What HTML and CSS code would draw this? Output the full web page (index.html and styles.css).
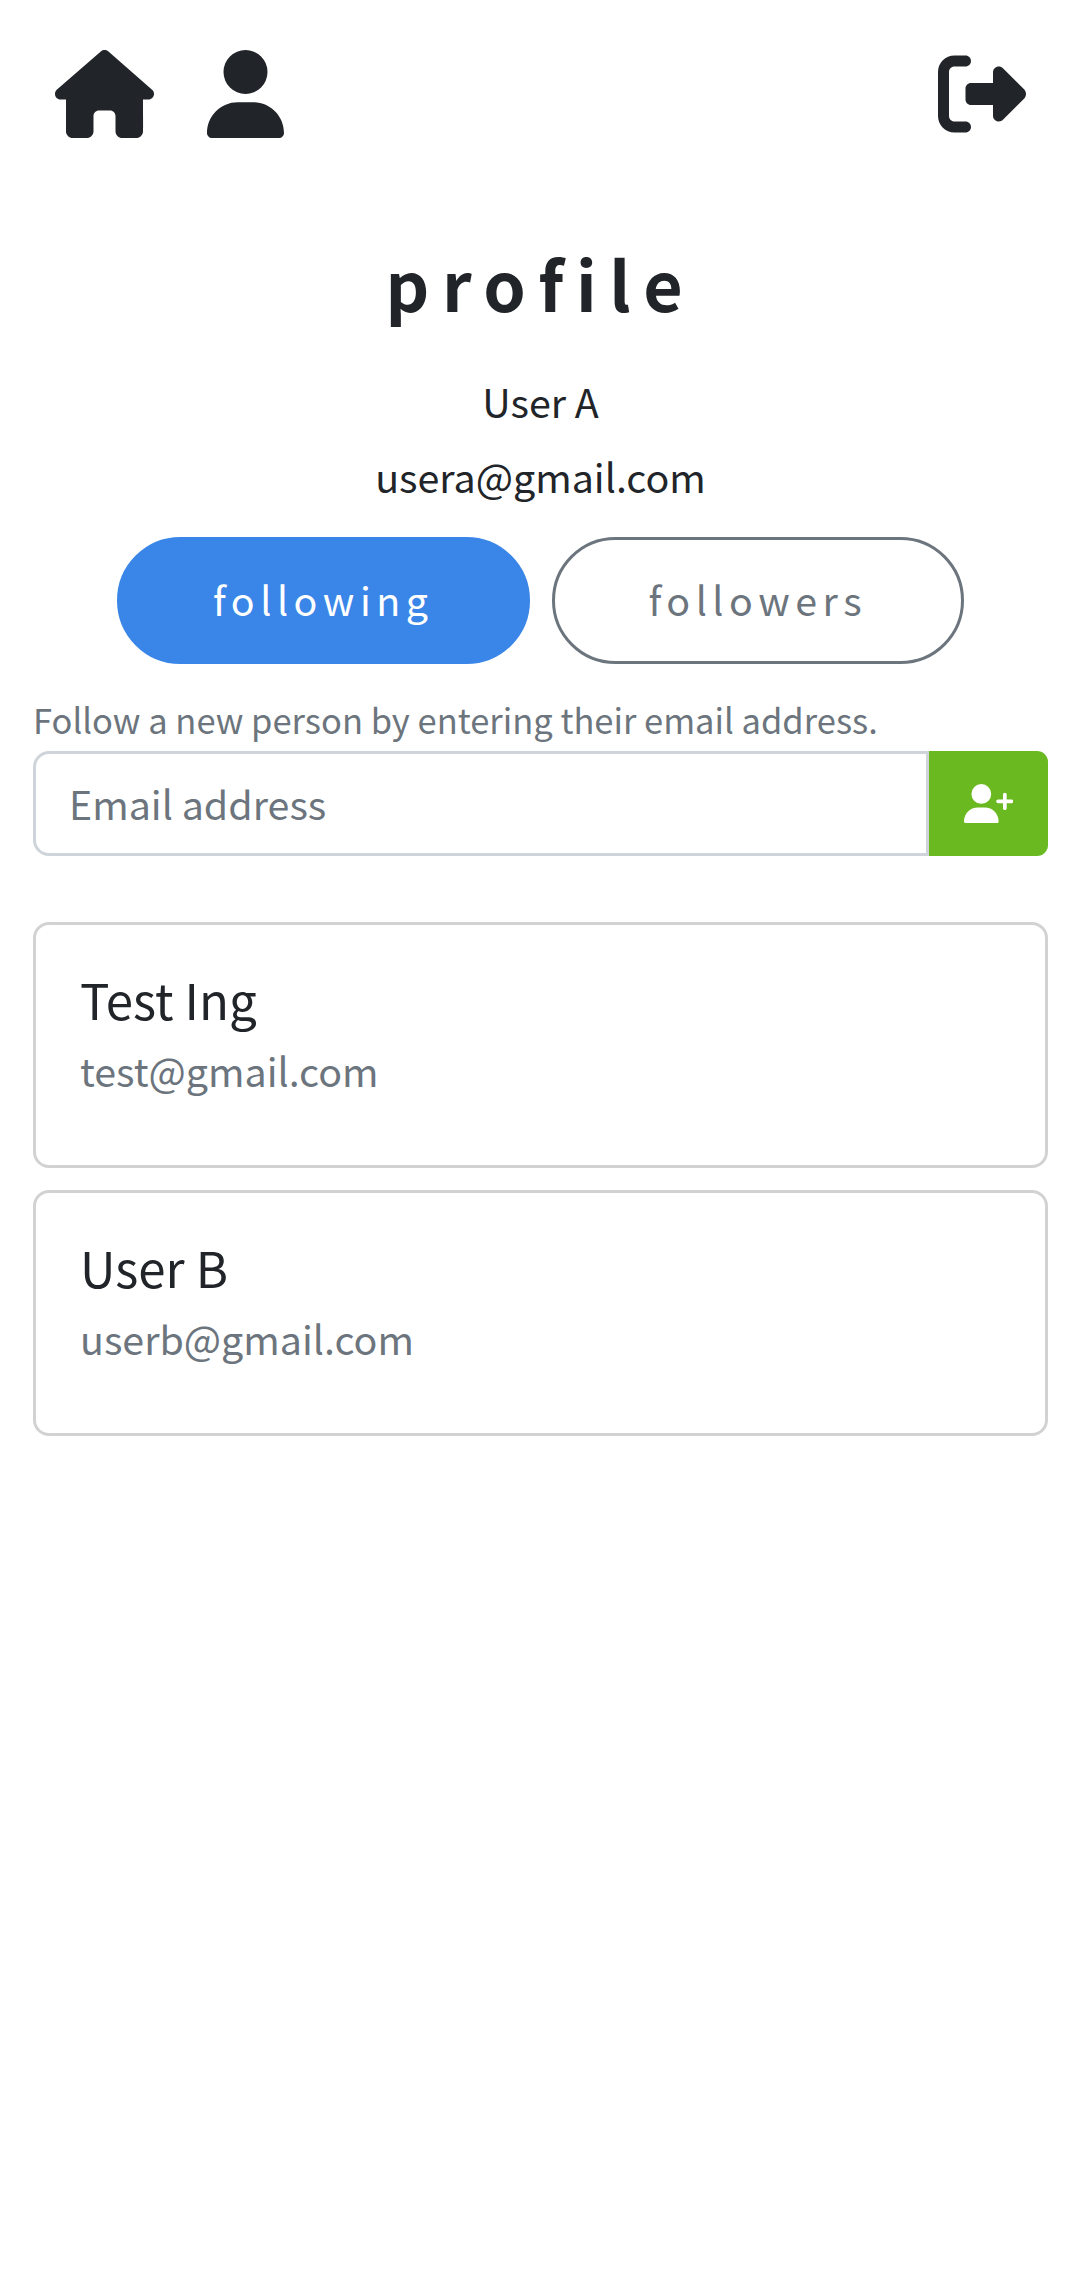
FILE: index.html
```html
<!DOCTYPE html>
<html lang="en">
<head>
<meta charset="utf-8">
<title>Profile</title>
<link rel="stylesheet" href="styles.css">
</head>
<body>
<nav class="navbar">
  <a class="nav-home" aria-label="Home"><svg class="icon icon-home" viewBox="0 0 576 512"><path d="M575.800 255.500c0 18-15 32.100-32 32.100h-32l.7 160.200c0 2.700-.2 5.400-.5 8.100V472c0 22.100-17.900 40-40 40H456c-1.100 0-2.200 0-3.300-.1c-1.400 .1-2.800 .1-4.200 .1H416 392c-22.100 0-40-17.900-40-40V448 384c0-17.700-14.300-32-32-32H256c-17.700 0-32 14.300-32 32v64 24c0 22.100-17.900 40-40 40H160 128.100c-1.500 0-3-.1-4.500-.2c-1.200 .1-2.400 .2-3.600 .2H104c-22.100 0-40-17.900-40-40V360c0-.9 0-1.900 .1-2.800V287.600H32c-18 0-32-14-32-32.100c0-9 3-17 10-24L266.400 8c7-7 15-8 22-8s15 2 21 7L564.800 231.500c8 7 12 15 11 24z"/></svg></a>
  <a class="nav-user" aria-label="Profile"><svg class="icon icon-user" viewBox="0 0 448 512"><path d="M224 256A128 128 0 1 0 224 0a128 128 0 1 0 0 256zm-45.700 48C79.800 304 0 383.800 0 482.300C0 498.700 13.300 512 29.700 512H418.300c16.400 0 29.700-13.300 29.700-29.700C448 383.800 368.200 304 269.700 304H178.300z"/></svg></a>
  <a class="nav-logout" aria-label="Log out"><svg class="icon icon-logout" viewBox="0 0 512 512"><path d="M377.900 105.900L500.700 228.700c7.200 7.200 11.300 17.100 11.300 27.300s-4.100 20.100-11.300 27.300L377.900 406.100c-6.400 6.400-15 9.900-24 9.900c-18.700 0-33.900-15.200-33.900-33.900l0-62.100-128 0c-17.700 0-32-14.300-32-32l0-64c0-17.700 14.300-32 32-32l128 0 0-62.100c0-18.700 15.200-33.900 33.900-33.900c9 0 17.600 3.600 24 9.900zM160 96L96 96c-17.700 0-32 14.300-32 32l0 256c0 17.700 14.300 32 32 32l64 0c17.700 0 32 14.300 32 32s-14.300 32-32 32l-64 0c-53 0-96-43-96-96L0 128C0 75 43 32 96 32l64 0c17.700 0 32 14.300 32 32s-14.300 32-32 32z"/></svg></a>
</nav>
<main class="content">
  <header class="profile">
    <h1 class="profile-title">profile</h1>
    <p class="profile-line">User A</p>
    <p class="profile-line">usera@gmail.com</p>
  </header>
  <div class="tabs">
    <button class="tab tab-active" type="button">following</button>
    <button class="tab" type="button">followers</button>
  </div>
  <form class="follow-form">
    <label class="follow-label" for="email">Follow a new person by entering their email address.</label>
    <div class="input-group">
      <input class="email-input" id="email" type="email" placeholder="Email address">
      <button class="add-button" type="button" aria-label="Follow"><svg class="icon-add" viewBox="0 0 640 512"><path d="M96 128a128 128 0 1 1 256 0A128 128 0 1 1 96 128zM0 482.300C0 383.800 79.800 304 178.300 304h91.400C368.200 304 448 383.800 448 482.300c0 16.400-13.300 29.700-29.700 29.700H29.700C13.300 512 0 498.700 0 482.300zM504 312V248H440c-13.300 0-24-10.700-24-24s10.700-24 24-24h64V136c0-13.300 10.700-24 24-24s24 10.700 24 24v64h64c13.300 0 24 10.700 24 24s-10.700 24-24 24H552v64c0 13.300-10.700 24-24 24s-24-10.700-24-24z"/></svg></button>
    </div>
  </form>
  <section class="people">
    <article class="card">
      <h2 class="card-name">Test Ing</h2>
      <p class="card-email">test@gmail.com</p>
    </article>
    <article class="card">
      <h2 class="card-name">User B</h2>
      <p class="card-email">userb@gmail.com</p>
    </article>
  </section>
</main>
</body>
</html>
```
FILE: styles.css
```css
* {
  box-sizing: border-box;
}

body {
  margin: 0;
  background: #fff;
  color: #212529;
  font-family: "Noto Sans CJK SC", "Noto Sans CJK JP", sans-serif;
  font-size: 39.4px;
  line-height: 66px;
}

h1,
h2,
p {
  margin: 0;
  font-weight: 400;
}

svg {
  display: block;
  fill: currentColor;
}

.navbar {
  display: flex;
  align-items: center;
  gap: 53px;
  height: 188px;
  padding: 0 55px;
}

.nav-logout {
  margin-left: auto;
}

.icon {
  height: 88px;
}

.icon-home {
  width: 99px;
}

.icon-user {
  width: 77px;
}

.icon-logout {
  width: 88px;
}

.content {
  padding: 54px 33px 0;
}

.profile {
  text-align: center;
}

.profile-title {
  margin-bottom: 44px;
  font-size: 68px;
  font-weight: 700;
  line-height: 82px;
  letter-spacing: 12.6px;
}

.profile-line {
  margin-bottom: 9px;
}

.tabs {
  display: flex;
  justify-content: center;
  gap: 22px;
  margin-top: 28px;
}

.tab {
  width: 412.500px;
  height: 127px;
  padding: 0 0 3px;
  border: 3px solid #6c757d;
  border-radius: 64px;
  background: transparent;
  color: #6c757d;
  font: inherit;
  letter-spacing: 5.5px;
}

.tab-active {
  border-color: #3a86e8;
  background: #3a86e8;
  color: #fff;
}

.follow-form {
  margin-top: 28px;
}

.follow-label {
  display: block;
  height: 59px;
  color: #6c757d;
  font-size: 34.5px;
  line-height: 54px;
}

.input-group {
  display: flex;
  height: 105px;
}

.email-input {
  flex: 1;
  min-width: 0;
  padding: 0 33px 2px;
  border: 3px solid #ced4da;
  border-radius: 16px 0 0 16px;
  background: #fff;
  color: #212529;
  font: inherit;
}

.email-input::placeholder {
  color: #6c757d;
  opacity: 1;
}

.add-button {
  display: flex;
  align-items: center;
  justify-content: center;
  width: 119px;
  padding: 0;
  border: 0;
  border-radius: 0 11px 11px 0;
  background: #6ab920;
  color: #fff;
}

.icon-add {
  width: 49.500px;
  height: 39.600px;
}

.people {
  display: flex;
  flex-direction: column;
  gap: 22px;
  margin-top: 66px;
}

.card {
  height: 246px;
  padding: 41px 44px;
  border: 3px solid #d2d2d2;
  border-radius: 16px;
}

.card-name {
  margin-bottom: 5px;
  font-size: 49.2px;
}

.card-email {
  color: #6c757d;
}
```
